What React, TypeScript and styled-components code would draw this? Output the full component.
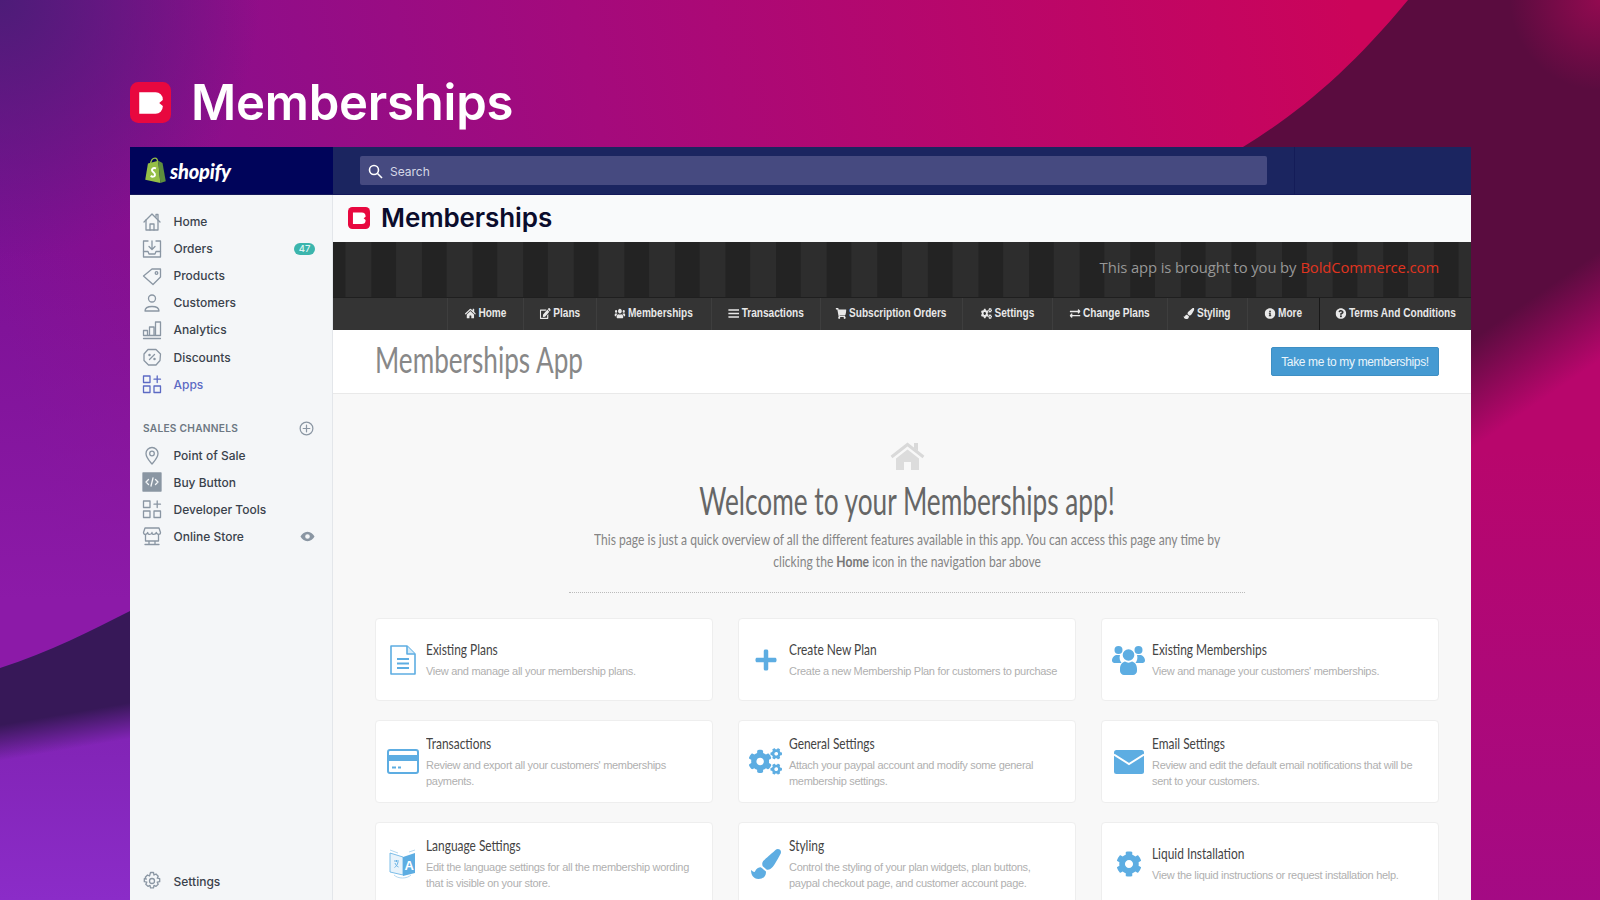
import React from "react";
import styled, { createGlobalStyle } from "styled-components";
import {
  FaBars,
  FaCog,
  FaCogs,
  FaEdit,
  FaExchangeAlt,
  FaHome,
  FaInfoCircle,
  FaPaintBrush,
  FaPlus,
  FaQuestionCircle,
  FaShoppingCart,
  FaUsers,
} from "react-icons/fa";

// no narrow family is installed, so Lato gets squeezed with scaleX where the app used PT Sans Narrow
const NARROW = `"Lato", "Liberation Sans", sans-serif`;

const GlobalStyle = createGlobalStyle`
  html, body {
    margin: 0;
    padding: 0;
    overflow: hidden;
    background: #7d1195;
  }
  * {
    box-sizing: border-box;
  }
`;

const Stage = styled.div`
  position: relative;
  width: 1600px;
  height: 900px;
  overflow: hidden;
  padding-left: 130px;
  font-family: "Inter", sans-serif;
`;

const Backdrop = styled.svg`
  position: absolute;
  inset: 0;
`;

const Hero = styled.header`
  position: relative;
  height: 147px;
  padding-top: 82px;
  display: flex;
  align-items: flex-start;
  gap: 20px;
`;

const HeroTitle = styled.h1`
  margin: -12px 0 0;
  font-family: "Inter", sans-serif;
  font-weight: 600;
  font-size: 49px;
  line-height: 66px;
  letter-spacing: -0.2px;
  color: #fff;
`;

const Window = styled.div`
  position: relative;
  width: 1341px;
  height: 753px;
  display: flex;
  flex-direction: column;
  overflow: hidden;
  background: #f8f8f8;
`;

const TopBar = styled.div`
  height: 48px;
  display: flex;
  background: #1b2560;
  border-bottom: 1px solid #14195a;
`;

const Brand = styled.div`
  width: 203px;
  padding-left: 14px;
  display: flex;
  align-items: center;
  gap: 3px;
  background: #00045a;
`;

const BrandName = styled.span`
  font-family: "Lato", sans-serif;
  font-weight: 900;
  font-style: italic;
  font-size: 20px;
  color: #fff;
  letter-spacing: -0.2px;
`;

const SearchArea = styled.div`
  flex: 1;
  display: flex;
  align-items: center;
  padding-left: 27px;
`;

const SearchBox = styled.div`
  width: 907px;
  height: 29px;
  padding: 1px 0 0 8px;
  display: flex;
  align-items: center;
  gap: 7px;
  border-radius: 2px;
  background: #464a80;
  color: #d5d7e6;
  font-size: 12px;
`;

const TopDivider = styled.div`
  width: 1px;
  margin-left: 27px;
  align-self: stretch;
  background: #141c58;
`;

const Body = styled.div`
  flex: 1;
  min-height: 0;
  display: flex;
`;

const Sidebar = styled.nav`
  width: 203px;
  padding: 13px 0 5px;
  display: flex;
  flex-direction: column;
  background: #f4f6f8;
  border-right: 1px solid #e3e6ea;
`;

const NavRow = styled.div<{ $active?: boolean }>`
  height: 27.1px;
  flex: none;
  padding: 0 17px 0 12px;
  display: flex;
  align-items: center;
  font-size: 12px;
  font-weight: 500;
  color: ${(p) => (p.$active ? "#5c6ac4" : "#3a424c")};
  svg.lead {
    width: 20px;
    height: 20px;
    margin-right: 11.5px;
    flex: none;
    color: ${(p) => (p.$active ? "#5c6ac4" : "#8a96a3")};
  }
`;

const Badge = styled.span`
  margin-left: auto;
  width: 21px;
  height: 12px;
  border-radius: 6px;
  background: #3bb5ad;
  color: #dff5f3;
  font-size: 9.5px;
  line-height: 12px;
  text-align: center;
`;

const SectionRow = styled.div`
  margin-top: 17px;
  height: 27px;
  flex: none;
  padding: 0 18px 0 13px;
  display: flex;
  align-items: center;
  justify-content: space-between;
  font-size: 10.2px;
  font-weight: 600;
  letter-spacing: 0.25px;
  color: #6d7883;
`;

const TrailIcon = styled.svg`
  margin-left: auto;
  width: 15px;
  height: 15px;
  color: #8a96a3;
`;

const SidebarFoot = styled.div`
  margin-top: auto;
`;

const Main = styled.main`
  flex: 1;
  min-width: 0;
  display: flex;
  flex-direction: column;
`;

const AppBar = styled.div`
  height: 47px;
  padding: 0 0 2px 15px;
  display: flex;
  align-items: center;
  gap: 11px;
  background: #f9fafb;
`;

const AppBarTitle = styled.h2`
  margin: 0;
  font-family: "Inter", sans-serif;
  font-weight: 600;
  font-size: 26px;
  letter-spacing: -0.1px;
  color: #0b0c2c;
`;

const Stripes = styled.div`
  height: 55px;
  padding: 0 32px 5px 0;
  display: flex;
  align-items: center;
  justify-content: flex-end;
  font-family: "Open Sans", sans-serif;
  font-size: 14.8px;
  letter-spacing: -0.1px;
  color: #979797;
  background: linear-gradient(90deg, #2d2d2d 0 25.3px, #232323 25.3px 50.6px) 12.5px 0 / 50.6px 100%;
  a {
    margin-left: 4px;
    color: #e0341f;
  }
`;

const TopNav = styled.div`
  height: 33px;
  display: flex;
  justify-content: flex-end;
  background: #343434;
  border-top: 1px solid #1f1f1f;
`;

const TopNavItem = styled.div<{ $width: number; $dark?: boolean }>`
  width: ${(p) => p.$width}px;
  padding-bottom: 2px;
  display: flex;
  align-items: center;
  justify-content: center;
  border-left: 1px solid ${(p) => (p.$dark ? "#181818" : "#3e3e3e")};
`;

const TopNavLabel = styled.span`
  display: flex;
  align-items: center;
  gap: 3px;
  transform: scaleX(0.84);
  white-space: nowrap;
  font-family: "Liberation Sans", sans-serif;
  font-size: 12px;
  font-weight: 700;
  color: #e8e8e8;
  svg {
    width: 13px;
    height: 11px;
  }
`;

const PageHeader = styled.div`
  height: 64px;
  padding: 0 32px 0 42px;
  display: flex;
  align-items: center;
  justify-content: space-between;
  background: #fff;
  border-bottom: 1px solid #e9e9e9;
`;

const PageTitle = styled.h3`
  margin: -6px 0 0;
  font-family: ${NARROW};
  font-weight: 400;
  font-size: 36px;
  color: #888;
  white-space: nowrap;
  transform: scaleX(0.726);
  transform-origin: left center;
`;

const ActionButton = styled.button`
  width: 168px;
  height: 29px;
  padding: 0;
  border: 1px solid #3e8fc4;
  border-radius: 2px;
  background: #459ad2;
  color: #eaf5fb;
  font-family: "Liberation Sans", sans-serif;
  font-size: 12px;
  letter-spacing: -0.35px;
`;

const Content = styled.div`
  flex: 1;
  min-height: 0;
  padding: 48px 32px 0 42px;
  display: flex;
  flex-direction: column;
  align-items: center;
`;

const WelcomeTitle = styled.h1`
  margin: 8px 0 0;
  font-family: ${NARROW};
  font-weight: 400;
  font-size: 38px;
  line-height: 44px;
  color: #666;
  white-space: nowrap;
  transform: scaleX(0.69);
`;

const WelcomeText = styled.p`
  margin: 6px 0 0;
  text-align: center;
  font-family: ${NARROW};
  font-size: 16px;
  line-height: 22px;
  color: #858585;
  white-space: nowrap;
  transform: scaleX(0.756);
  b {
    color: #777;
  }
`;

const DottedRule = styled.hr`
  width: 676px;
  margin: 20px 0 25px;
  border: 0;
  border-top: 1px dotted #bbb;
`;

const CardGrid = styled.div`
  width: 100%;
  display: grid;
  grid-template-columns: repeat(3, 338px);
  justify-content: space-between;
  grid-auto-rows: 83px;
  row-gap: 19px;
`;

const Card = styled.article`
  display: flex;
  align-items: center;
  padding-right: 14px;
  background: #fff;
  border: 1px solid #eeeeee;
  border-radius: 4px;
`;

const CardIcon = styled.div`
  width: 43px;
  margin: 0 2px 0 5px;
  flex: none;
  display: flex;
  justify-content: center;
  color: #5dade2;
`;

const CardTitle = styled.div`
  margin-top: -1px;
  font-family: ${NARROW};
  font-size: 16px;
  line-height: 20px;
  color: #444;
  white-space: nowrap;
  transform: scaleX(0.745);
  transform-origin: left center;
`;

const CardText = styled.div`
  margin-top: 5px;
  font-family: "Liberation Sans", sans-serif;
  font-size: 11px;
  line-height: 15.5px;
  letter-spacing: -0.3px;
  color: #b0b0b0;
`;

const BoldLogo = ({ size }: { size: number }) => (
  <svg width={size} height={size} viewBox="0 0 40 40" style={{ flex: "none" }}>
    <rect width="40" height="40" rx="8" fill="#e8083f" />
    <path
      d="M9 10h16a7 7 0 0 1 7 7v.500l-3.500 3 3.500 3v.500a7 7 0 0 1-7 7H9z"
      fill="#fff"
    />
  </svg>
);

const ShopifyBag = () => (
  <svg width="23" height="27" viewBox="0 0 21 25">
    <path d="M1 21 3.5 6 13 3.5 15 24z" fill="#95bf47" />
    <path d="M13 3.5 17 5.5 20 22.5 15 24z" fill="#5e8e3e" />
    <path d="M6 7c0-4 2-6 4-6s2.5 2 2.5 4" fill="none" stroke="#95bf47" strokeWidth="1.2" />
    <path
      d="M11 10.5c-3-1-4.500 1-3.500 2.500s3 1.800 2.500 4c-.4 1.500-2.500 1.500-4 .5"
      fill="none"
      stroke="#fff"
      strokeWidth="1.8"
    />
  </svg>
);

const WelcomeHouse = () => (
  <svg width="35" height="28" viewBox="0 0 35 28" style={{ flex: "none" }}>
    <path d="M1.500 15 17.500 2.500 33.500 15" fill="none" stroke="#d9d9d9" strokeWidth="3" />
    <path d="M24 1h4v8l-4-3z" fill="#d9d9d9" />
    <path d="M6 16.500 17.500 7.500 29 16.500V28H21V20H14V28H6z" fill="#dcdcdc" />
  </svg>
);

const line = {
  fill: "none",
  stroke: "currentColor",
  strokeWidth: 1.3,
  strokeLinejoin: "round",
  strokeLinecap: "round",
} as const;

const Lead = ({ children }: { children: React.ReactNode }) => (
  <svg className="lead" viewBox="0 0 20 20" {...line}>
    {children}
  </svg>
);

const navTop = [
  {
    label: "Home",
    icon: (
      <>
        <path d="M2 10 10 2l8 8" />
        <path d="M4 8v10h12V8M14 5V2.500h2V7" />
        <path d="M8 18v-6h4v6" />
      </>
    ),
  },
  {
    label: "Orders",
    badge: "47",
    icon: (
      <>
        <path d="M6 2H1.500v16h17V2H14" />
        <path d="M1.500 12.500H6l1 2.500h6l1-2.500h4.500" />
        <path d="M10 2v8M7 7.500l3 3 3-3" />
      </>
    ),
  },
  {
    label: "Products",
    icon: (
      <>
        <path d="M1.500 10 10 3h8.500v8L11 18.500z" />
        <circle cx="14.500" cy="7" r="1.300" />
      </>
    ),
  },
  {
    label: "Customers",
    icon: (
      <>
        <circle cx="10" cy="5.500" r="3.500" />
        <path d="M3 18c0-3 2.500-4.500 7-4.500s7 1.500 7 4.500z" />
      </>
    ),
  },
  {
    label: "Analytics",
    icon: (
      <>
        <path d="M1.500 15.500v-5h4v5M7.500 15.500V7h4.500v8.500M13.500 15.500V2h5v13.500M1.500 15.500h17M1.500 18.500h17" />
      </>
    ),
  },
  {
    label: "Discounts",
    icon: (
      <>
        <path d="M6 2.500h8L18.500 7l-.5 6.500L14 18H6.500L2 13.500V7z" />
        <path d="m7.500 12.500 5-5" />
        <circle cx="7.500" cy="8" r=".6" />
        <circle cx="12.500" cy="12" r=".6" />
      </>
    ),
  },
];

const GridPlus = () => (
  <>
    <rect x="1.500" y="2" width="6.500" height="6.500" />
    <rect x="1.500" y="12" width="6.500" height="6.500" />
    <rect x="12" y="12" width="6.500" height="6.500" />
    <path d="M15.200 2v6.500M12 5.200h6.500" />
  </>
);

const navChannels = [
  {
    label: "Point of Sale",
    icon: (
      <>
        <path d="M10 19c-3-3.500-6-6.500-6-10.500a6 6 0 0 1 12 0c0 4-3 7-6 10.500z" />
        <circle cx="10" cy="8.500" r="2.300" />
      </>
    ),
  },
  {
    label: "Buy Button",
    icon: (
      <>
        <rect x="1" y="1" width="18" height="18" fill="currentColor" />
        <path d="m6.500 7.500-2.500 2.500 2.500 2.500M13.500 7.500l2.500 2.500-2.500 2.500M11 6 9 14" stroke="#f4f6f8" />
      </>
    ),
  },
  { label: "Developer Tools", icon: <GridPlus /> },
  {
    label: "Online Store",
    trail: true,
    icon: (
      <>
        <path d="M3 2h14l1.500 4.500c0 2.500-3.500 2.500-4.200 0-.7 2.500-4.600 2.500-4.300 0-.3 2.500-4.300 2.500-4.300 0-.700 2.500-4.200 2.500-4.200 0z" />
        <path d="M3.500 9v6h13V9M3 18.500h14M7 15v3.500M13 15v3.500" />
      </>
    ),
  },
];

const menu = [
  { label: "Home", width: 76, Icon: FaHome },
  { label: "Plans", width: 73, Icon: FaEdit },
  { label: "Memberships", width: 115, Icon: FaUsers },
  { label: "Transactions", width: 109, Icon: FaBars },
  { label: "Subscription Orders", width: 142, Icon: FaShoppingCart },
  { label: "Settings", width: 90, Icon: FaCogs },
  { label: "Change Plans", width: 115, Icon: FaExchangeAlt },
  { label: "Styling", width: 80, Icon: FaPaintBrush },
  { label: "More", width: 72, Icon: FaInfoCircle },
  { label: "Terms And Conditions", width: 152, Icon: FaQuestionCircle, dark: true },
];

const DocIcon = () => (
  <svg width="26" height="30" viewBox="0 0 26 30" fill="none" stroke="currentColor" strokeWidth="1.600">
    <path d="M1 1h16l8 8v20H1z" strokeLinejoin="round" />
    <path d="M17 1v8h8" fill="#d6ebf8" strokeLinejoin="round" />
    <path d="M7 14h12M7 18.500h12M7 23h12" strokeWidth="2" />
  </svg>
);

const PeopleIcon = () => (
  <svg width="33" height="30" viewBox="0 0 33 30" fill="currentColor">
    <circle cx="6.500" cy="5" r="4" />
    <circle cx="26.500" cy="5" r="4" />
    <path d="M0 15.500c0-3.500 3-5.500 5-5.500h3c-1 3 0 6 1.500 8H2.500C1 18 0 17 0 15.500zM33 15.500c0-3.500-3-5.500-5-5.500h-3c1 3 0 6-1.500 8h7c1.500 0 2.500-1 2.500-2.500z" />
    <circle cx="16.500" cy="10" r="5.800" />
    <path d="M8 24c0-5 3-7 5-7.500 2 1.500 5 1.500 7 0 2 .5 5 2.500 5 7.500v2c0 2-2 4-4 4h-9c-2 0-4-2-4-4z" />
  </svg>
);

const CreditIcon = () => (
  <svg width="32" height="25" viewBox="0 0 32 25" fill="none">
    <rect x="1" y="1" width="30" height="23" rx="2" stroke="currentColor" strokeWidth="2" />
    <rect x="1" y="6" width="30" height="6" fill="currentColor" />
    <path d="M5 18.500h4M11 18.500h3" stroke="currentColor" strokeWidth="2" />
  </svg>
);

const MailIcon = () => (
  <svg width="30" height="24" viewBox="0 0 30 24">
    <rect width="30" height="24" rx="2.500" fill="currentColor" />
    <path d="M0 4.500 15 14 30 4.500" fill="none" stroke="#fff" strokeWidth="2" />
  </svg>
);

const LanguageIcon = () => (
  <svg width="27" height="32" viewBox="0 0 27 32">
    <path d="M1 5 14 9v18L1 24z" fill="#e8f3fb" stroke="currentColor" strokeWidth=".8" />
    <path d="M14 9 26 5v20l-12 3z" fill="currentColor" />
    <path d="M1 2l8 3M26 2l-6 2M5 27c4 4 13 4 17 0" fill="none" stroke="#b5d8ef" strokeWidth="1" />
    <text x="15.500" y="22" fontFamily="Liberation Sans, sans-serif" fontWeight="700" fontSize="13" fill="#fff">
      A
    </text>
    <path d="M5 13h5M7.500 12v2M9 14c-.5 3-2 4.500-3.500 5.500M6 15c.5 2 2 3.500 3.500 4" fill="none" stroke="currentColor" strokeWidth=".9" />
  </svg>
);

const Glyph = styled.span<{ $size: number }>`
  display: flex;
  svg {
    width: ${(p) => p.$size}px;
    height: ${(p) => p.$size}px;
  }
`;

const cards = [
  { title: "Existing Plans", text: "View and manage all your membership plans.", icon: <DocIcon /> },
  {
    title: "Create New Plan",
    text: "Create a new Membership Plan for customers to purchase",
    icon: <Glyph $size={24}><FaPlus /></Glyph>,
  },
  { title: "Existing Memberships", text: "View and manage your customers' memberships.", icon: <PeopleIcon /> },
  { title: "Transactions", text: "Review and export all your customers' memberships payments.", icon: <CreditIcon /> },
  {
    title: "General Settings",
    text: "Attach your paypal account and modify some general membership settings.",
    icon: <Glyph $size={33}><FaCogs /></Glyph>,
  },
  { title: "Email Settings", text: "Review and edit the default email notifications that will be sent to your customers.", icon: <MailIcon /> },
  { title: "Language Settings", text: "Edit the language settings for all the membership wording that is visible on your store.", icon: <LanguageIcon /> },
  {
    title: "Styling",
    text: "Control the styling of your plan widgets, plan buttons, paypal checkout page, and customer account page.",
    icon: <Glyph $size={30}><FaPaintBrush /></Glyph>,
  },
  {
    title: "Liquid Installation",
    text: "View the liquid instructions or request installation help.",
    icon: <Glyph $size={26}><FaCog /></Glyph>,
  },
];

const Background = () => (
  <Backdrop width="1600" height="900" viewBox="0 0 1600 900">
    <defs>
      <linearGradient id="base" gradientUnits="userSpaceOnUse" x1="0" y1="300" x2="1350" y2="0">
        <stop offset="0" stopColor="#7d1195" />
        <stop offset=".45" stopColor="#a40a7c" />
        <stop offset="1" stopColor="#cb045a" />
      </linearGradient>
      <radialGradient id="corner" gradientUnits="userSpaceOnUse" cx="0" cy="0" r="260">
        <stop offset="0" stopColor="#4d1c78" />
        <stop offset="1" stopColor="#4d1c78" stopOpacity="0" />
      </radialGradient>
      <linearGradient id="left" gradientUnits="userSpaceOnUse" x1="0" y1="250" x2="0" y2="600">
        <stop offset="0" stopColor="#8a1aa6" stopOpacity="0" />
        <stop offset="1" stopColor="#8c1aa8" />
      </linearGradient>
      <linearGradient id="right" gradientUnits="userSpaceOnUse" x1="1471" y1="340" x2="1522" y2="414">
        <stop offset="0" stopColor="#5a0c3f" />
        <stop offset="1" stopColor="#b8066c" />
      </linearGradient>
      <linearGradient id="rightLow" gradientUnits="userSpaceOnUse" x1="0" y1="450" x2="0" y2="900">
        <stop offset="0" stopColor="#a40a84" stopOpacity="0" />
        <stop offset="1" stopColor="#a40a84" />
      </linearGradient>
      <radialGradient id="tip" gradientUnits="userSpaceOnUse" cx="1600" cy="0" r="90">
        <stop offset="0" stopColor="#920a50" />
        <stop offset="1" stopColor="#920a50" stopOpacity="0" />
      </radialGradient>
      <linearGradient id="dusk" gradientUnits="userSpaceOnUse" x1="0" y1="725" x2="6" y2="760">
        <stop offset="0" stopColor="#371858" />
        <stop offset="1" stopColor="#371858" stopOpacity="0" />
      </linearGradient>
      <linearGradient id="lower" gradientUnits="userSpaceOnUse" x1="0" y1="740" x2="0" y2="900">
        <stop offset="0" stopColor="#8224b6" />
        <stop offset="1" stopColor="#8b2cc8" />
      </linearGradient>
    </defs>
    <rect width="1600" height="900" fill="url(#base)" />
    <rect width="500" height="400" fill="url(#corner)" />
    <rect width="1600" height="900" fill="url(#left)" />
    <path d="M0 668C50 652 92 630 130 611V900H0z" fill="url(#lower)" />
    <path d="M0 668C50 652 92 630 130 611V900H0z" fill="url(#dusk)" />
    <path d="M1408 0C1350 70 1300 112 1243 147V900H1600V0z" fill="url(#right)" />
    <rect x="1400" y="450" width="200" height="450" fill="url(#rightLow)" />
    <rect x="1500" width="100" height="100" fill="url(#tip)" />
  </Backdrop>
);

export default function App() {
  return (
    <>
      <GlobalStyle />
      <Stage>
        <Background />
        <Hero>
          <BoldLogo size={41} />
          <HeroTitle>Memberships</HeroTitle>
        </Hero>
        <Window>
          <TopBar>
            <Brand>
              <ShopifyBag />
              <BrandName>shopify</BrandName>
            </Brand>
            <SearchArea>
              <SearchBox>
                <svg width="15" height="15" viewBox="0 0 15 15" fill="none" stroke="#fff" strokeWidth="1.600">
                  <circle cx="6" cy="6" r="4.500" />
                  <path d="m9.500 9.500 4.500 4.500" />
                </svg>
                Search
              </SearchBox>
              <TopDivider />
            </SearchArea>
          </TopBar>
          <Body>
            <Sidebar>
              {navTop.map((item) => (
                <NavRow key={item.label}>
                  <Lead>{item.icon}</Lead>
                  {item.label}
                  {item.badge && <Badge>{item.badge}</Badge>}
                </NavRow>
              ))}
              <NavRow $active>
                <Lead>
                  <GridPlus />
                </Lead>
                Apps
              </NavRow>
              <SectionRow>
                SALES CHANNELS
                <TrailIcon viewBox="0 0 16 16" {...line}>
                  <circle cx="8" cy="8" r="6.800" />
                  <path d="M8 4.500v7M4.500 8h7" />
                </TrailIcon>
              </SectionRow>
              {navChannels.map((item) => (
                <NavRow key={item.label}>
                  <Lead>{item.icon}</Lead>
                  {item.label}
                  {item.trail && (
                    <TrailIcon viewBox="0 0 16 16">
                      <path
                        fillRule="evenodd"
                        fill="currentColor"
                        d="M8 3c3.500 0 6 2.500 7.500 5-1.500 2.500-4 5-7.500 5S2 10.500.5 8C2 5.500 4.500 3 8 3zm0 2.500a2.500 2.500 0 1 0 0 5 2.500 2.500 0 0 0 0-5z"
                      />
                    </TrailIcon>
                  )}
                </NavRow>
              ))}
              <SidebarFoot>
                <NavRow>
                  <Lead>
                    <path d="M8.500 1.500h3l.5 2.500 2-1 2.200 2.200-1 2 2.500.5v3l-2.500.5 1 2-2.200 2.200-2-1-.5 2.500h-3l-.5-2.500-2 1-2.200-2.200 1-2-2.500-.5v-3L4.300 8.200l-1-2L5.500 4l2 1z" />
                    <circle cx="10" cy="10" r="2.500" />
                  </Lead>
                  Settings
                </NavRow>
              </SidebarFoot>
            </Sidebar>
            <Main>
              <AppBar>
                <BoldLogo size={22} />
                <AppBarTitle>Memberships</AppBarTitle>
              </AppBar>
              <Stripes>
                This app is brought to you by <a>BoldCommerce.com</a>
              </Stripes>
              <TopNav>
                {menu.map(({ label, width, Icon, dark }) => (
                  <TopNavItem key={label} $width={width} $dark={dark}>
                    <TopNavLabel>
                      <Icon preserveAspectRatio="none" />
                      {label}
                    </TopNavLabel>
                  </TopNavItem>
                ))}
              </TopNav>
              <PageHeader>
                <PageTitle>Memberships App</PageTitle>
                <ActionButton>Take me to my memberships!</ActionButton>
              </PageHeader>
              <Content>
                <WelcomeHouse />
                <WelcomeTitle>Welcome to your Memberships app!</WelcomeTitle>
                <WelcomeText>
                  This page is just a quick overview of all the different features available in this app. You can access this page any time by
                  <br />
                  clicking the <b>Home</b> icon in the navigation bar above
                </WelcomeText>
                <DottedRule />
                <CardGrid>
                  {cards.map((card) => (
                    <Card key={card.title}>
                      <CardIcon>{card.icon}</CardIcon>
                      <div>
                        <CardTitle>{card.title}</CardTitle>
                        <CardText>{card.text}</CardText>
                      </div>
                    </Card>
                  ))}
                </CardGrid>
              </Content>
            </Main>
          </Body>
        </Window>
      </Stage>
    </>
  );
}
